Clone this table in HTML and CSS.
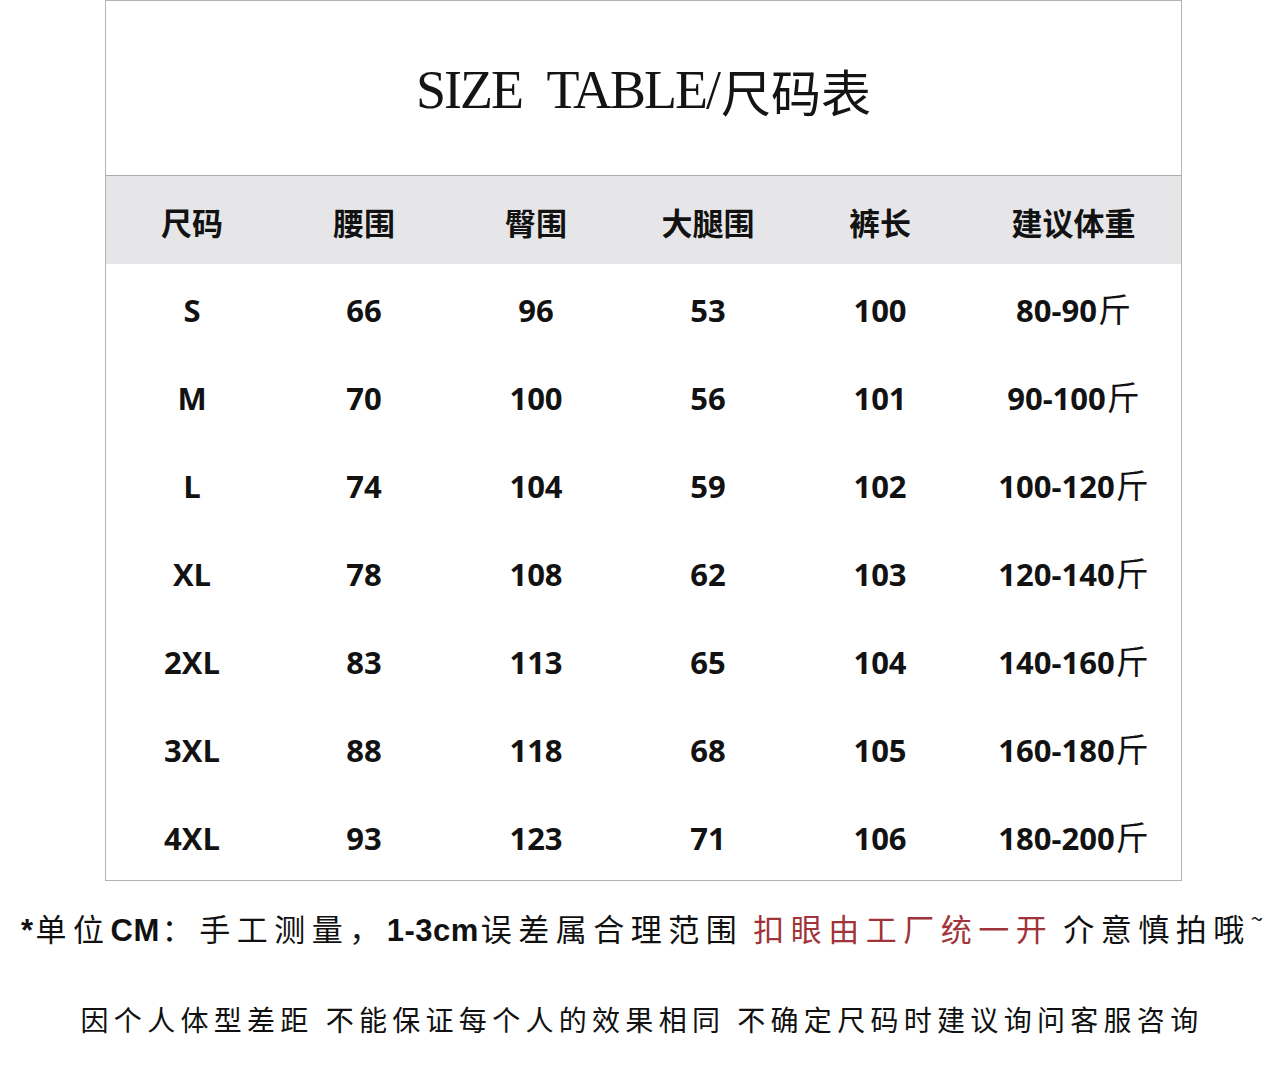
FILE: index.html
```html
<!DOCTYPE html>
<html lang="zh-CN">
<head>
<meta charset="utf-8">
<title>SIZE TABLE/尺码表</title>
<link rel="stylesheet" href="styles.css">
</head>
<body>
<div class="sheet">
  <div class="title"><span class="title-latin">SIZE TABLE/</span><span class="title-cjk">尺码表</span></div>
  <div class="grid">
    <div class="row head">
      <div class="cell">尺码</div><div class="cell">腰围</div><div class="cell">臀围</div><div class="cell">大腿围</div><div class="cell">裤长</div><div class="cell">建议体重</div>
    </div>
    <div class="row">
      <div class="cell">S</div><div class="cell">66</div><div class="cell">96</div><div class="cell">53</div><div class="cell">100</div><div class="cell">80-90<span class="jin">斤</span></div>
    </div>
    <div class="row">
      <div class="cell">M</div><div class="cell">70</div><div class="cell">100</div><div class="cell">56</div><div class="cell">101</div><div class="cell">90-100<span class="jin">斤</span></div>
    </div>
    <div class="row">
      <div class="cell">L</div><div class="cell">74</div><div class="cell">104</div><div class="cell">59</div><div class="cell">102</div><div class="cell">100-120<span class="jin">斤</span></div>
    </div>
    <div class="row">
      <div class="cell">XL</div><div class="cell">78</div><div class="cell">108</div><div class="cell">62</div><div class="cell">103</div><div class="cell">120-140<span class="jin">斤</span></div>
    </div>
    <div class="row">
      <div class="cell">2XL</div><div class="cell">83</div><div class="cell">113</div><div class="cell">65</div><div class="cell">104</div><div class="cell">140-160<span class="jin">斤</span></div>
    </div>
    <div class="row">
      <div class="cell">3XL</div><div class="cell">88</div><div class="cell">118</div><div class="cell">68</div><div class="cell">105</div><div class="cell">160-180<span class="jin">斤</span></div>
    </div>
    <div class="row">
      <div class="cell">4XL</div><div class="cell">93</div><div class="cell">123</div><div class="cell">71</div><div class="cell">106</div><div class="cell">180-200<span class="jin">斤</span></div>
    </div>
  </div>
</div>
<p class="note note-1"><span class="lat">*</span>单位<span class="lat">CM</span>：手工测量，<span class="lat">1-3cm</span>误差属合理范围<span class="gap"></span><span class="red">扣眼由工厂统一开</span><span class="gap"></span>介意慎拍哦<span class="tilde">~</span></p>
<p class="note note-2">因个人体型差距<span class="gap2"></span>不能保证每个人的效果相同<span class="gap2"></span>不确定尺码时建议询问客服咨询</p>
</body>
</html>
```

FILE: styles.css
```css
html, body {
  margin: 0;
  padding: 0;
  background: #ffffff;
}

body {
  width: 1284px;
  height: 1065px;
  overflow: hidden;
  font-family: "Noto Sans CJK SC", "Open Sans", sans-serif;
  color: #111111;
}

.sheet {
  margin-left: 105px;
  width: 1077px;
  box-sizing: border-box;
  border: 1px solid #b3b3b3;
}

.title {
  height: 175px;
  border-bottom: 1px solid #ababab;
  display: flex;
  align-items: center;
  justify-content: center;
  padding-top: 4px;
  box-sizing: border-box;
  color: #141414;
}

.title-latin {
  font-family: "Liberation Serif", "Times New Roman", serif;
  font-size: 54px;
  letter-spacing: -2px;
  word-spacing: 14px;
}

.title-cjk {
  font-family: "Noto Sans CJK SC", sans-serif;
  font-weight: 400;
  font-size: 50px;
  margin-left: 2px;
}

.grid {
  display: flex;
  flex-direction: column;
}

.row {
  display: grid;
  grid-template-columns: repeat(5, 172px) 1fr;
  height: 88px;
}

.row.head {
  background: #e6e6e8;
}

.cell {
  display: flex;
  align-items: center;
  justify-content: center;
  font-family: "Open Sans", "Noto Sans CJK SC", sans-serif;
  font-weight: 700;
  font-size: 31px;
  padding-top: 4px;
  box-sizing: border-box;
  color: #121212;
}

.head .cell {
  font-family: "Noto Sans CJK SC", sans-serif;
  font-weight: 700;
  font-size: 31px;
  padding-top: 2px;
}

.jin {
  font-family: "Noto Sans CJK SC", sans-serif;
  font-weight: 400;
  font-size: 33px;
  margin-left: 1px;
  position: relative;
  top: -2px;
}

.note {
  margin: 0;
  text-align: center;
  font-family: "Noto Sans CJK SC", sans-serif;
  font-weight: 400;
  white-space: nowrap;
  color: #111111;
}

.note-1 {
  margin-top: 14px;
  font-size: 31px;
  letter-spacing: 6.5px;
  line-height: 44px;
}

.note-1 .lat {
  font-family: "Liberation Sans", "Open Sans", sans-serif;
  font-weight: 700;
  letter-spacing: 0.5px;
  margin-right: 2px;
}

.gap {
  display: inline-block;
  width: 10px;
}

.red {
  color: #a1343a;
}

.tilde {
  display: inline-block;
  font-size: 22px;
  vertical-align: 14px;
  letter-spacing: 0;
}

.note-2 {
  margin-top: 46px;
  font-size: 28px;
  letter-spacing: 5.3px;
  line-height: 40px;
}

.gap2 {
  display: inline-block;
  width: 12px;
}
```
